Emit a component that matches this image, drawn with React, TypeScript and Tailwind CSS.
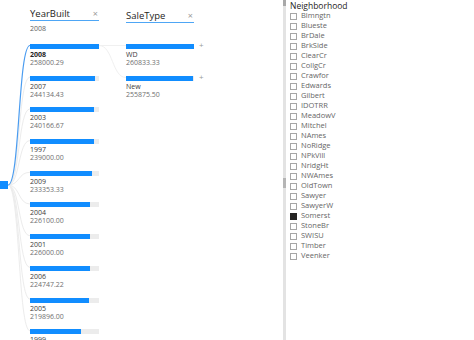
import React from "react";

const years = [
  { label: "2008", value: "258000.29", v: 258000.29 },
  { label: "2007", value: "244134.43", v: 244134.43 },
  { label: "2003", value: "240166.67", v: 240166.67 },
  { label: "1997", value: "239000.00", v: 239000 },
  { label: "2009", value: "233353.33", v: 233353.33 },
  { label: "2004", value: "226100.00", v: 226100 },
  { label: "2001", value: "226000.00", v: 226000 },
  { label: "2006", value: "224747.22", v: 224747.22 },
  { label: "2005", value: "219896.00", v: 219896 },
  { label: "1999", value: "191000.00", v: 191000 },
];

const saleTypes = [
  { label: "WD", value: "260833.33", v: 260833.33 },
  { label: "New", value: "255875.50", v: 255875.5 },
];

const hoods = [
  "Blmngtn", "Blueste", "BrDale", "BrkSide", "ClearCr", "CollgCr", "Crawfor", "Edwards",
  "Gilbert", "IDOTRR", "MeadowV", "Mitchel", "NAmes", "NoRidge", "NPkVill", "NridgHt",
  "NWAmes", "OldTown", "Sawyer", "SawyerW", "Somerst", "StoneBr", "SWISU", "Timber", "Veenker",
];

const PITCH = 31.7;
const FIRST = 43;

const Connectors = () => {
  const paths = years.map((_, i) => {
    const y = FIRST + i * PITCH + 2.5;
    return { d: `M8,185 C20,185 18,${y} 30,${y}`, sel: i === 0 };
  });
  return (
    <svg className="absolute inset-0 pointer-events-none" width="283" height="340">
      {paths.map((p, i) =>
        !p.sel ? <path key={i} d={p.d} fill="none" stroke="#ececec" strokeWidth="1" /> : null
      )}
      <path d="M99,45.5 L126,45.5" fill="none" stroke="#f0f0f0" strokeWidth="1" />
      <path d="M99,45.5 C113,45.5 112,77.5 126,77.5" fill="none" stroke="#f0f0f0" strokeWidth="1" />
      <path d={paths[0].d} fill="none" stroke="#4a9cf0" strokeWidth="1.2" />
      <rect x="0" y="181" width="8" height="8" fill="#118DFF" />
    </svg>
  );
};

const Header = ({ title }: { title: string }) => (
  <div className="flex items-center justify-between border-b border-[#4ea6f5] h-[13px] pb-[1px]">
    <span className="text-[9.5px] leading-none text-[#252423] font-medium">{title}</span>
    <span className="text-[9px] leading-none text-[#9a9a9a] pr-[1px]">×</span>
  </div>
);

const Bar = ({ pct }: { pct: number }) => (
  <div className="h-[5px] w-full bg-[#ececec]">
    <div className="h-full bg-[#118DFF]" style={{ width: `${pct}%` }} />
  </div>
);

export default function App() {
  const maxY = years[0].v;
  const maxS = saleTypes[0].v;
  return (
    <div
      className="w-[474px] h-[340px] bg-white flex overflow-hidden"
      style={{ fontFamily: '"Open Sans", "Noto Sans", sans-serif' }}
    >
      <div className="relative w-[283px] h-full">
        <Connectors />
        <div className="relative flex pl-[30px] gap-[27px]">
          <div className="w-[69px] pt-[8px]">
            <Header title="YearBuilt" />
            <div className="text-[7px] leading-none text-[#605e5c] mt-[4px]">2008</div>
            <div className="mt-[12px]">
              {years.map((y, i) => (
                <div key={y.label} className="h-[31.7px]">
                  <Bar pct={(y.v / maxY) * 100} />
                  <div
                    className={`text-[7px] leading-[7px] mt-[2px] ${
                      i === 0 ? "font-bold text-[#252423]" : "text-[#3b3a39]"
                    }`}
                  >
                    {y.label}
                  </div>
                  <div className="text-[7px] leading-[7px] text-[#707070] mt-[1px]">{y.value}</div>
                </div>
              ))}
            </div>
          </div>
          <div className="w-[68px] pt-[10px]">
            <Header title="SaleType" />
            <div className="mt-[21px]">
              {saleTypes.map((s) => (
                <div key={s.label} className="h-[31.7px] relative">
                  <Bar pct={(s.v / maxS) * 100} />
                  <span className="absolute left-[73px] top-[-3px] text-[8px] leading-none text-[#9a9a9a]">+</span>
                  <div className="text-[7px] leading-[7px] mt-[2px] text-[#3b3a39]">{s.label}</div>
                  <div className="text-[7px] leading-[7px] text-[#707070] mt-[1px]">{s.value}</div>
                </div>
              ))}
            </div>
          </div>
        </div>
      </div>

      <div className="w-[3px] h-full bg-[#e3e3e3] flex flex-col">
        <div className="h-[6px] bg-[#a8a8a8]" />
        <div className="h-[172px]" />
        <div className="h-[10px] bg-[#b5b5b5]" />
      </div>

      <div className="pl-[4px] pt-[1px]">
        <div className="text-[8.5px] leading-[9px] text-[#252423] font-medium">Neighborhood</div>
        <div className="mt-[1px]">
          {hoods.map((h) => (
            <div key={h} className="h-[10px] flex items-center gap-[4px]">
              <div
                className={`w-[7px] h-[7px] border ${
                  h === "Somerst" ? "bg-[#252423] border-[#252423]" : "border-[#a6a6a6] bg-white"
                }`}
              />
              <span className="text-[7.5px] leading-none text-[#666666]">{h}</span>
            </div>
          ))}
        </div>
      </div>
    </div>
  );
}
